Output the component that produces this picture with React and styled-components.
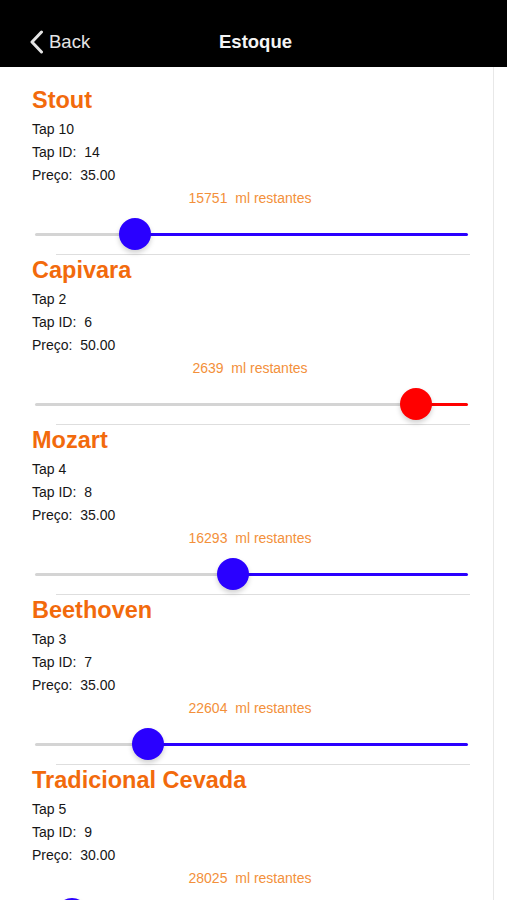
import styled, { createGlobalStyle } from "styled-components";

const GlobalStyle = createGlobalStyle`
    html, body {
        margin: 0;
        padding: 0;
        background: #ffffff;
        font-family: "Liberation Sans", Arial, sans-serif;
        overflow: hidden;
    }
`;

const Page = styled.div`
    width: 507px;
    height: 900px;
    overflow: hidden;
    display: flex;
    flex-direction: column;
`;

const Header = styled.header`
    height: 67px;
    flex-shrink: 0;
    background: #000000;
    display: grid;
    grid-template-columns: 1fr auto 1fr;
    align-items: center;
    padding-top: 17px;
    box-sizing: border-box;
`;

const BackButton = styled.div`
    display: flex;
    align-items: center;
    gap: 5px;
    padding-left: 29px;
    color: #e4e4e4;
    font-size: 18.5px;
`;

const Title = styled.h1`
    margin: 0;
    color: #f4f4f4;
    font-size: 18.5px;
    font-weight: 700;
    transform: translateX(2px);
`;

const Panel = styled.main`
    flex: 1;
    margin-left: 15px;
    width: 479px;
    box-sizing: border-box;
    border-right: 1px solid #e8e8e8;
    padding: 18px 25px 0 17px;
`;

const Item = styled.section`
    display: flex;
    flex-direction: column;
`;

const Name = styled.h2`
    margin: 0;
    color: #f26a0c;
    font-size: 23.5px;
    line-height: 30px;
    font-weight: 700;
`;

const Info = styled.div`
    margin-top: 3px;
    display: flex;
    flex-direction: column;
`;

const Line = styled.p`
    margin: 0;
    font-size: 14px;
    line-height: 23px;
    color: #161616;
    white-space: pre;
`;

const Remaining = styled.p`
    margin: 0;
    text-align: center;
    font-size: 14px;
    line-height: 23px;
    color: #f3903a;
    white-space: pre;
`;

const SliderBox = styled.div`
    position: relative;
    margin: 6px 0 2px 3px;
    height: 36px;
    display: flex;
    align-items: center;
`;

const TrackMin = styled.div`
    height: 3px;
    background: #d4d4d4;
    border-radius: 2px 0 0 2px;
`;

const TrackMax = styled.div`
    flex: 1;
    height: 3px;
    background: ${(p) => p.$color};
    border-radius: 0 2px 2px 0;
`;

const Thumb = styled.div`
    position: absolute;
    top: 2px;
    width: 32px;
    height: 32px;
    margin-left: -16px;
    border-radius: 50%;
    background: ${(p) => p.$color};
    box-shadow: 0 3px 5px rgba(0, 0, 0, 0.18);
`;

const Separator = styled.hr`
    margin: 0 -2px 0 24px;
    border: none;
    border-top: 1px solid #dedede;
    height: 0;
`;

const taps = [
    { name: "Stout", tap: 10, id: 14, price: "35.00", ml: 15751, pos: 23.0, color: "#2a00ff" },
    { name: "Capivara", tap: 2, id: 6, price: "50.00", ml: 2639, pos: 87.9, color: "#ff0000" },
    { name: "Mozart", tap: 4, id: 8, price: "35.00", ml: 16293, pos: 45.8, color: "#2a00ff" },
    { name: "Beethoven", tap: 3, id: 7, price: "35.00", ml: 22604, pos: 26.2, color: "#2a00ff" },
    { name: "Tradicional Cevada", tap: 5, id: 9, price: "30.00", ml: 28025, pos: 8.6, color: "#2a00ff" },
];

const Chevron = () => (
    <svg width="15" height="24" viewBox="0 0 15 24" fill="none">
        <path d="M12.5 2 L3 12 L12.5 22" stroke="#e4e4e4" strokeWidth="3" strokeLinecap="round" strokeLinejoin="round" />
    </svg>
);

const Slider = ({ pos, color }) => (
    <SliderBox>
        <TrackMin style={{ width: `${pos}%` }} />
        <TrackMax $color={color} />
        <Thumb $color={color} style={{ left: `${pos}%` }} />
    </SliderBox>
);

const App = () => {
    return (
        <Page>
            <GlobalStyle />
            <Header>
                <BackButton>
                    <Chevron />
                    <span>Back</span>
                </BackButton>
                <Title>Estoque</Title>
                <div />
            </Header>
            <Panel>
                {taps.map((t, index) => (
                    <Item key={index}>
                        <Name>{t.name}</Name>
                        <Info>
                            <Line>Tap {t.tap}</Line>
                            <Line>{`Tap ID:  ${t.id}`}</Line>
                            <Line>{`Preço:  ${t.price}`}</Line>
                            <Remaining>{`${t.ml}  ml restantes`}</Remaining>
                        </Info>
                        <Slider pos={t.pos} color={t.color} />
                        <Separator />
                    </Item>
                ))}
            </Panel>
        </Page>
    );
};

export default App;
